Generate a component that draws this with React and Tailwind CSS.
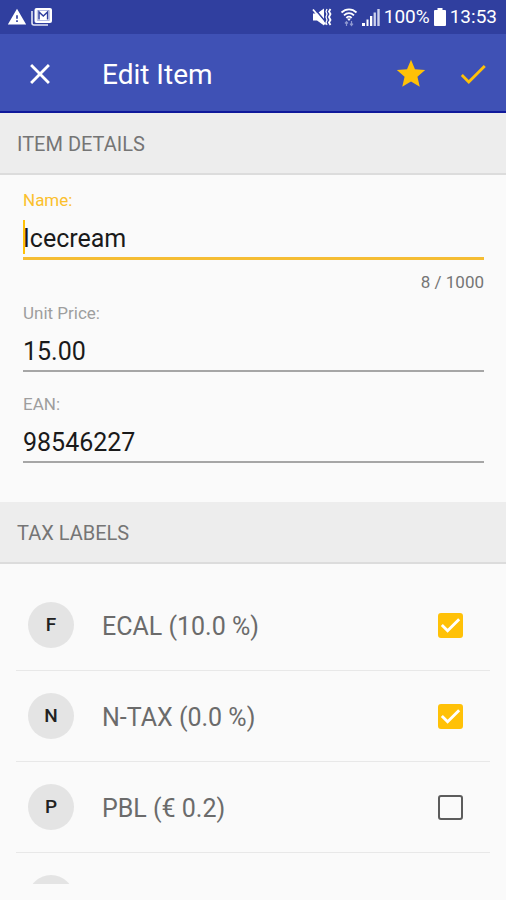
import { useState } from "react";
import { MdCheck, MdClose, MdStar, MdWarning } from "react-icons/md";

const TAX_LABELS = [
  { id: "ecal", code: "F", name: "ECAL (10.0 %)", checked: true },
  { id: "ntax", code: "N", name: "N-TAX (0.0 %)", checked: true },
  { id: "pbl", code: "P", name: "PBL (€ 0.2)", checked: false },
  { id: "vat", code: "", name: "", checked: false },
];

function MailStackIcon() {
  return (
    <svg width="22" height="20" viewBox="0 0 22 20" fill="none" aria-hidden="true">
      <path d="M1 4v12a2 2 0 0 0 2 2h14" stroke="#e3e6f5" strokeWidth="1.6" />
      <rect x="3.500" y="1" width="17.500" height="15" rx="2" fill="white" />
      <path d="M6.300 3.500h12v10h-12z" stroke="#9fa8da" strokeWidth="0.8" />
      <path d="M8 12.500V5l4.300 4L16.600 5v7.500" stroke="#303f9f" strokeWidth="1.5" />
    </svg>
  );
}

function VibrateIcon() {
  return (
    <svg width="20" height="20" viewBox="0 0 20 20" fill="none" aria-hidden="true">
      <path d="M1 6.500h4l7-5v17l-7-5H1z" fill="white" />
      <path d="M2.500 1.500l12 14.500" stroke="#303f9f" strokeWidth="1.600" />
      <path d="M1 2.500l12.500 15" stroke="white" strokeWidth="1.800" />
      <path d="M15 2l-1 2.500 1 2.500-1 3 1 3-1 2.500 1 2.500" stroke="white" strokeWidth="1.200" />
      <path d="M18.500 2l-1.500 2.500 1.500 2.500-1.500 3 1.500 3-1.500 2.500 1.500 2.500" stroke="white" strokeWidth="1.800" />
    </svg>
  );
}

function WifiIcon() {
  return (
    <svg width="18" height="20" viewBox="0 0 18 20" fill="none" aria-hidden="true">
      <path d="M1.500 5.500c4.500-4.300 10.500-4.300 15 0M4 8.300c3-2.800 7-2.800 10 0M6.300 10.800c1.700-1.500 3.700-1.500 5.400 0" stroke="white" strokeWidth="1.800" />
      <path d="M7 11.500h4L9 14z" fill="white" />
      <path d="M6.500 19v-4M5 16.500l1.500-1.800L8 16.500M11.500 14v4.500M10 16.700l1.500 1.800 1.500-1.800" stroke="#8f99d0" strokeWidth="1.2" />
    </svg>
  );
}

function SignalIcon() {
  return (
    <svg width="18" height="18" viewBox="0 0 18 18" aria-hidden="true">
      <path d="M0 15h3v3H0zM4.500 11.500h2V18h-2zM8 8h2.300v10H8z" fill="white" />
      <path d="M11.600 4.500h2.300V18h-2.300zM15.300 1h2.400v17h-2.400z" fill="#ccd1ec" />
    </svg>
  );
}

function BatteryIcon() {
  return (
    <svg width="12" height="18" viewBox="0 0 12 18" fill="white" aria-hidden="true">
      <path d="M3.500 0h5v2H11a1 1 0 0 1 1 1v14a1 1 0 0 1-1 1H1a1 1 0 0 1-1-1V3a1 1 0 0 1 1-1h2.500z" />
    </svg>
  );
}

function StatusBar() {
  return (
    <div className="h-[34px] shrink-0 bg-[#303f9f] pl-[7px] pr-[9px] flex items-center justify-between text-white">
      <div className="flex items-center gap-1">
        <MdWarning size={20} />
        <MailStackIcon />
      </div>
      <div className="flex items-center text-[19px] leading-6">
        <VibrateIcon />
        <span className="ml-2">
          <WifiIcon />
        </span>
        <span className="ml-1">
          <SignalIcon />
        </span>
        <span className="ml-1">100%</span>
        <span className="ml-1">
          <BatteryIcon />
        </span>
        <span className="ml-1">13:53</span>
      </div>
    </div>
  );
}

function SectionHeader({ children }) {
  return (
    <h2 className="h-[62px] pt-0.5 px-[17px] flex items-center bg-[#ededed] border-b-2 border-[#dcdcdc] text-[20px] leading-6 text-[#757575]">
      {children}
    </h2>
  );
}

function Field({ id, label, value, onChange, active }) {
  return (
    <div className="relative">
      <label
        htmlFor={id}
        className={`block text-[17px] leading-5 ${active ? "text-[#fbc02d]" : "text-[#9e9e9e]"}`}
      >
        {label}
      </label>
      <input
        id={id}
        type="text"
        value={value}
        onChange={(e) => onChange(e.target.value)}
        className={`block w-full box-content h-[37px] pt-[10px] text-[25px] text-[#1a1a1a] caret-[#ffc107] outline-none ${
          active ? "border-b-[3px] border-[#f5bd33]" : "border-b-2 border-[#a6a6a6]"
        }`}
      />
      {/* text cursor */}
      {active && <span className="absolute left-0 top-[30px] w-[2px] h-[34px] bg-[#ffc107]" />}
    </div>
  );
}

function TaxRow({ item, onToggle }) {
  return (
    <li className="mx-4 h-[91px] shrink-0 border-b border-[#e8e8e8]">
      <label className="h-full pl-3 pr-[27px] flex items-center">
        <span className="w-[46px] h-[46px] rounded-full bg-[#e4e4e4] flex items-center justify-center text-[19px] font-medium text-[#212121]">
          {item.code}
        </span>
        <span className="ml-7 flex-1 pt-1 text-[25px] leading-8 text-[#6b6b6b]">{item.name}</span>
        <span className="relative w-[25px] h-[25px]">
          <input
            type="checkbox"
            checked={item.checked}
            onChange={() => onToggle(item.id)}
            aria-label={item.name || "Tax label"}
            className="block appearance-none w-[25px] h-[25px] rounded-[3px] border-2 border-[#5c5c5c] checked:border-[#ffc107] checked:bg-[#ffc107]"
          />
          {item.checked && (
            <svg
              viewBox="0 0 26 26"
              fill="none"
              className="absolute inset-0 pointer-events-none"
              aria-hidden="true"
            >
              <path d="M4 12.500l6 6L22 6.500" stroke="white" strokeWidth="3" />
            </svg>
          )}
        </span>
      </label>
    </li>
  );
}

export default function App() {
  const [name, setName] = useState("Icecream");
  const [price, setPrice] = useState("15.00");
  const [ean, setEan] = useState("98546227");
  const [taxes, setTaxes] = useState(TAX_LABELS);

  const toggleTax = (id) =>
    setTaxes(taxes.map((t) => (t.id === id ? { ...t, checked: !t.checked } : t)));

  return (
    <div className="h-screen pb-4 flex flex-col overflow-hidden bg-[#fafafa] font-[Roboto,sans-serif]">
      <StatusBar />

      {/* App bar */}
      <header className="h-[79px] shrink-0 pt-0.5 pl-[23px] pr-4 flex items-center bg-[#3f51b5] border-b-2 border-[#10199b] text-white">
        <button type="button" aria-label="Close">
          <MdClose size={34} />
        </button>
        <h1 className="ml-[45px] flex-1 pt-0.5 text-[28px] leading-8">Edit Item</h1>
        <button type="button" aria-label="Favourite" className="text-[#ffc107]">
          <MdStar size={34} />
        </button>
        <button type="button" aria-label="Save" className="ml-7 text-[#ffc107]">
          <MdCheck size={34} />
        </button>
      </header>

      <main className="flex-1 min-h-0 overflow-hidden">
        <SectionHeader>ITEM DETAILS</SectionHeader>
        <form
          className="pt-[15px] pb-[39px] pl-[23px] pr-[22px]"
          onSubmit={(e) => e.preventDefault()}
        >
          <Field id="name" label="Name:" value={name} onChange={setName} active />
          <p className="mt-3 mb-[11px] text-right text-[17px] leading-5 text-[#757575]">
            {name.length} / 1000
          </p>
          <Field id="price" label="Unit Price:" value={price} onChange={setPrice} />
          <div className="h-[22px]" />
          <Field id="ean" label="EAN:" value={ean} onChange={setEan} />
        </form>

        <SectionHeader>TAX LABELS</SectionHeader>
        <ul className="pt-4">
          {taxes.map((t) => (
            <TaxRow key={t.id} item={t} onToggle={toggleTax} />
          ))}
        </ul>
      </main>
    </div>
  );
}
